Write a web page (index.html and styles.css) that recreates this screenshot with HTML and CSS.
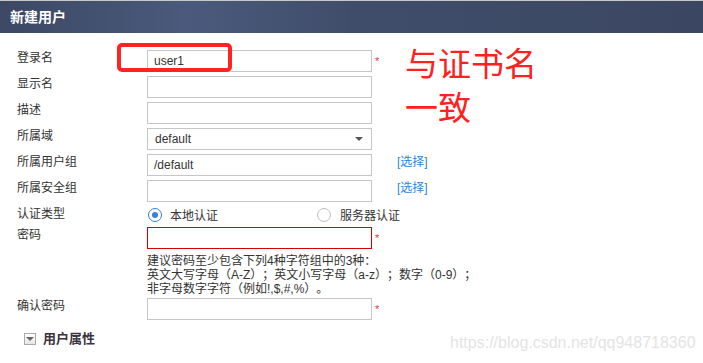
FILE: index.html
```html
<!DOCTYPE html>
<html lang="zh-CN">
<head>
    <meta charset="UTF-8">
    <title>新建用户</title>
    <link rel="stylesheet" href="styles.css">
</head>
<body>
    <div class="topline"></div>
    <div class="header">新建用户</div>

    <div class="form">
        <div class="label">登录名</div>
        <div class="input">user1</div>
        <div class="extra"><span class="star">*</span></div>

        <div class="label">显示名</div>
        <div class="input"></div>
        <div class="extra"></div>

        <div class="label">描述</div>
        <div class="input"></div>
        <div class="extra"></div>

        <div class="label">所属域</div>
        <div class="input select"><span>default</span><span class="arrow"></span></div>
        <div class="extra"></div>

        <div class="label">所属用户组</div>
        <div class="input">/default</div>
        <div class="extra"><a class="link">[选择]</a></div>

        <div class="label">所属安全组</div>
        <div class="input"></div>
        <div class="extra"><a class="link">[选择]</a></div>

        <div class="label radio-label">认证类型</div>
        <div class="radios">
            <div class="radio-item first"><span class="radio checked"></span>本地认证</div>
            <div class="radio-item"><span class="radio"></span>服务器认证</div>
        </div>

        <div class="label">密码</div>
        <div class="input error"></div>
        <div class="extra"><span class="star">*</span></div>

        <div class="hint">
            建议密码至少包含下列4种字符组中的3种：<br>
            英文大写字母（A-Z）；英文小写字母（a-z）；数字（0-9）；<br>
            非字母数字字符（例如!,$,#,%）。
        </div>

        <div class="label">确认密码</div>
        <div class="input"></div>
        <div class="extra"><span class="star">*</span></div>
    </div>

    <div class="section">
        <span class="toggle"><span class="toggle-arrow"></span></span>
        <span class="section-title">用户属性</span>
    </div>

    <!-- annotation drawn over the screenshot -->
    <div class="mark-box"></div>
    <div class="mark-text">与证书名<br>一致</div>

    <div class="watermark">https://blog.csdn.net/qq948718360</div>
</body>
</html>
```

FILE: styles.css
```css
body {
    margin: 0;
    width: 703px;
    height: 363px;
    overflow: hidden;
    position: relative;
    background: #fff;
    color: #333;
    font-family: "Liberation Sans", "Noto Sans CJK SC", sans-serif;
    font-size: 12px;
    text-spacing-trim: space-all;
}

.topline {
    height: 1px;
    background: #c8c8c8;
}

.header {
    height: 32px;
    line-height: 32px;
    padding-left: 10px;
    color: #fff;
    font-size: 14px;
    font-weight: bold;
    background: linear-gradient(90deg, #3c4864 0%, #4a5a7c 27%, #404d6a 50%, #3b4762 100%);
}

.form {
    display: grid;
    grid-template-columns: 130px 225px 1fr;
    row-gap: 4px;
    padding: 17px 0 0 17px;
}

.label {
    line-height: 16px;
}

.input {
    height: 22px;
    box-sizing: border-box;
    border: 1px solid #c6c6c6;
    padding-left: 6px;
    line-height: 21px;
    color: #333;
}

.input.error {
    border-color: #d40000;
}

.select {
    display: flex;
    justify-content: space-between;
    align-items: center;
    padding-left: 7px;
    padding-right: 8px;
}

.arrow {
    width: 0;
    height: 0;
    border-left: 4px solid transparent;
    border-right: 4px solid transparent;
    border-top: 4px solid #555;
}

.extra {
    display: flex;
    align-items: flex-start;
}

.star {
    color: #e8334a;
    font-size: 11px;
    line-height: 22px;
    margin-left: 3px;
}

.link {
    color: #2f84e2;
    line-height: 16px;
    margin-left: 25px;
    cursor: pointer;
}

.radio-label {
    line-height: 17px;
}

.radios {
    grid-column: 2 / 4;
    display: flex;
    align-items: center;
    height: 17px;
}

.radio-item {
    display: flex;
    align-items: center;
}

.radio-item.first {
    width: 170px;
}

.radio {
    width: 14px;
    height: 14px;
    box-sizing: border-box;
    border: 1px solid #bdbdbd;
    border-radius: 50%;
    margin-right: 9px;
    display: flex;
    align-items: center;
    justify-content: center;
}

.radio-item.first .radio {
    margin-left: 1px;
    margin-right: 8px;
}

.radio.checked {
    border-color: #3a7fd5;
}

.radio.checked::after {
    content: "";
    width: 6px;
    height: 6px;
    border-radius: 50%;
    background: #3a7fd5;
}

.hint {
    grid-column: 2 / 4;
    line-height: 14px;
    margin-top: 1px;
    margin-bottom: -2px;
}

.section {
    display: flex;
    align-items: center;
    height: 16px;
    margin: 11px 0 0 24px;
}

.toggle {
    width: 12px;
    height: 12px;
    box-sizing: border-box;
    border: 1px solid #aaa;
    background: linear-gradient(#fff, #e6e6e6);
    display: flex;
    align-items: center;
    justify-content: center;
    margin-right: 7px;
}

.toggle-arrow {
    width: 0;
    height: 0;
    border-left: 4px solid transparent;
    border-right: 4px solid transparent;
    border-top: 4px solid #666;
}

.section-title {
    font-size: 13px;
    font-weight: bold;
    line-height: 16px;
    color: #3a3340;
}

.mark-box {
    position: absolute;
    left: 117px;
    top: 43px;
    width: 115px;
    height: 29px;
    box-sizing: border-box;
    border: 4px solid #ff2323;
    border-radius: 5px;
}

.mark-text {
    position: absolute;
    left: 405px;
    top: 40px;
    font-family: "Noto Sans CJK SC", sans-serif;
    font-size: 33px;
    line-height: 44px;
    color: #ff2020;
}

.watermark {
    position: absolute;
    left: 450px;
    top: 334px;
    font-size: 16px;
    color: #e4e4e4;
}
```
